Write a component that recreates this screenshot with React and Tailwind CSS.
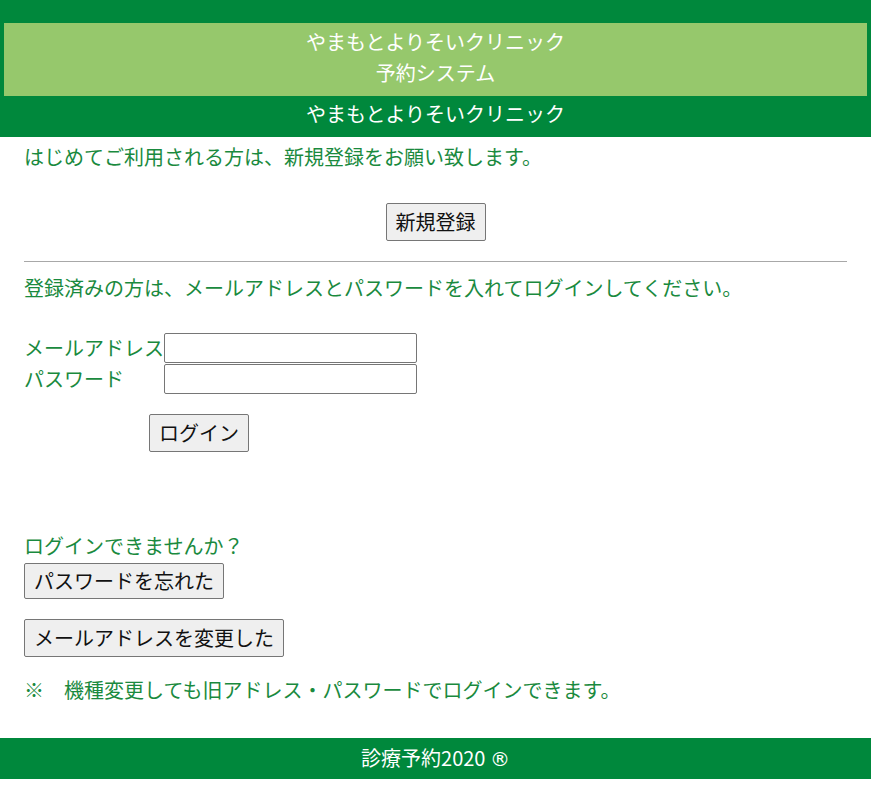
import React from 'react';

const font = { fontFamily: '"Noto Sans CJK JP", "Noto Sans", sans-serif' };

function Btn({ children, className = '' }) {
  return (
    <button type="button" className={`inline-flex items-center justify-center border border-[#767676] bg-[#efefef] rounded-[2px] px-[9px] text-[20px] text-[#111] leading-none ${className}`}>
      {children}
    </button>
  );
}

export default function App() {
  return (
    <div className="w-full bg-white text-[20px] text-[#1a8a3e]" style={font}>
      {/* header */}
      <header className="bg-[#00883c] pt-[23px] text-white text-center">
        <div className="mx-[4px] bg-[#96c86c] pt-[3px] pb-[8px] leading-[31px]">
          <div>やまもとよりそいクリニック</div>
          <div>予約システム</div>
        </div>
        <div className="h-[41px] leading-[36px]">やまもとよりそいクリニック</div>
      </header>

      <main className="px-6">
        <p className="pt-[5px] leading-[30px]">はじめてご利用される方は、新規登録をお願い致します。</p>
        <div className="mt-[31px] flex justify-center">
          <Btn className="h-[38px] w-[100px]">新規登録</Btn>
        </div>
        <hr className="mt-[20px] border-0 border-t border-[#a8a8a8]" />

        <p className="mt-[11px] leading-[30px]">登録済みの方は、メールアドレスとパスワードを入れてログインしてください。</p>

        <div className="mt-[30px] flex flex-col gap-[1px]">
          <div className="flex items-center">
            <span className="w-[140px] leading-[30px] whitespace-nowrap">メールアドレス</span>
            <input type="text" className="h-[30px] w-[253px] border border-[#767676] rounded-[2px] bg-white" />
          </div>
          <div className="flex items-center">
            <span className="w-[140px] leading-[30px] whitespace-nowrap">パスワード</span>
            <input type="password" className="h-[30px] w-[253px] border border-[#767676] rounded-[2px] bg-white" />
          </div>
        </div>
        <div className="mt-[20px] ml-[125px]">
          <Btn className="h-[38px] w-[100px]">ログイン</Btn>
        </div>

        <p className="mt-[79px] leading-[30px]">ログインできませんか？</p>
        <div className="mt-[2px]">
          <Btn className="h-[36px] w-[200px]">パスワードを忘れた</Btn>
        </div>
        <div className="mt-[20px]">
          <Btn className="h-[38px] w-[260px]">メールアドレスを変更した</Btn>
        </div>
        <p className="mt-[18px] leading-[30px]">※　機種変更しても旧アドレス・パスワードでログインできます。</p>
      </main>

      <footer className="mt-[33px] h-[41px] bg-[#00883c] text-white text-center leading-[40px]">
        診療予約2020 <span className="font-['DejaVu_Sans',sans-serif] text-[20px]">®</span>
      </footer>
      <div className="h-[16px]" />
    </div>
  );
}
